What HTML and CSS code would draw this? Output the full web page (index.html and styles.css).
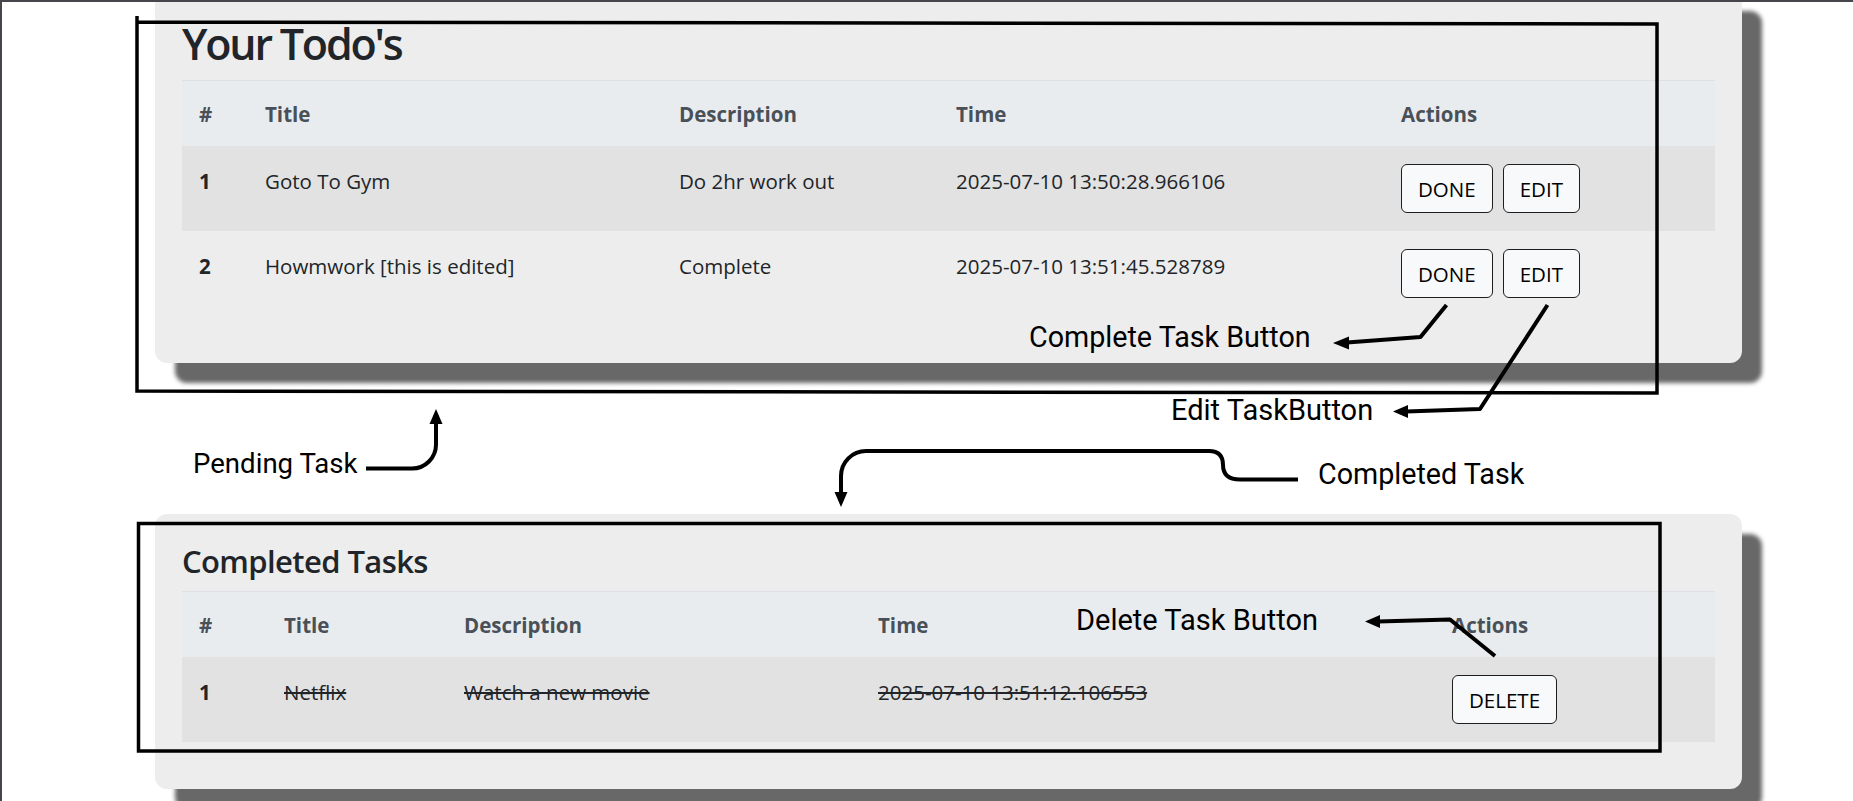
FILE: index.html
```html
<!DOCTYPE html>
<html lang="en">
<head>
<meta charset="utf-8">
<title>Your Todo's</title>
<link rel="stylesheet" href="styles.css">
</head>
<body>
<div class="viewport">
  <main class="stack">
    <section class="card card-todos">
      <h2 class="title-main">Your Todo's</h2>
      <table class="table">
        <thead>
          <tr>
            <th class="t1-num">#</th>
            <th class="t1-title">Title</th>
            <th class="t1-desc">Description</th>
            <th class="t1-time">Time</th>
            <th class="t1-act">Actions</th>
          </tr>
        </thead>
        <tbody>
          <tr class="striped">
            <th>1</th>
            <td>Goto To Gym</td>
            <td>Do 2hr work out</td>
            <td>2025-07-10 13:50:28.966106</td>
            <td><div class="actions"><button class="btn">DONE</button><button class="btn">EDIT</button></div></td>
          </tr>
          <tr>
            <th>2</th>
            <td>Howmwork [this is edited]</td>
            <td>Complete</td>
            <td>2025-07-10 13:51:45.528789</td>
            <td><div class="actions"><button class="btn">DONE</button><button class="btn">EDIT</button></div></td>
          </tr>
        </tbody>
      </table>
    </section>

    <section class="card card-done">
      <h4 class="title-sub">Completed Tasks</h4>
      <table class="table">
        <thead>
          <tr>
            <th class="t2-num">#</th>
            <th class="t2-title">Title</th>
            <th class="t2-desc">Description</th>
            <th class="t2-time">Time</th>
            <th class="t2-act">Actions</th>
          </tr>
        </thead>
        <tbody>
          <tr class="striped">
            <th>1</th>
            <td class="struck">Netflix</td>
            <td class="struck">Watch a new movie</td>
            <td class="struck">2025-07-10 13:51:12.106553</td>
            <td><div class="actions"><button class="btn">DELETE</button></div></td>
          </tr>
        </tbody>
      </table>
    </section>
  </main>
</div>

<svg class="annotations" width="1853" height="801" viewBox="0 0 1853 801" aria-hidden="true">
  <g fill="none" stroke="#000" stroke-width="3.5">
    <path d="M137 16 V391 L1657 393 V24 L137 22"/>
    <path d="M138.5 523.5 H1660 V751 H138.5 Z"/>
  </g>
  <g fill="none" stroke="#000" stroke-width="4" stroke-linejoin="round">
    <path d="M1446.5 305 L1420.5 337 L1347 342.5"/>
    <path d="M1547.5 305 L1480 409 L1406 411.5"/>
    <path d="M366 468.5 H412 A24 24 0 0 0 436 444.5 V422"/>
    <path d="M1298 479.5 H1240 Q1223 479.5 1223 465 Q1223 451 1209 451 H866 A25 25 0 0 0 841 476 V494"/>
    <path d="M1378 621.5 L1450 619.5 L1495 656"/>
  </g>
  <g fill="#000">
    <polygon points="1333,343 1349,336.5 1349,349.5"/>
    <polygon points="1393,411.5 1408,405 1408,418"/>
    <polygon points="436,409 429.5,424 442.5,424"/>
    <polygon points="841,507 834.5,492 847.5,492"/>
    <polygon points="1365,621.5 1380,615 1380,628"/>
  </g>
</svg>

<div class="note note-complete">Complete Task Button</div>
<div class="note note-edit">Edit TaskButton</div>
<div class="note note-pending">Pending Task</div>
<div class="note note-completed">Completed Task</div>
<div class="note note-delete">Delete Task Button</div>
</body>
</html>
```

FILE: styles.css
```css
html, body {
  margin: 0;
  padding: 0;
}

body {
  background: #ffffff;
  border-top: 2px solid #48464d;
  border-left: 2px solid #48464d;
  font-family: "Open Sans", "Noto Sans", sans-serif;
  color: #212529;
}

.viewport {
  height: 799px;
  overflow: hidden;
}

.stack {
  display: flex;
  flex-direction: column;
  align-items: flex-start;
  gap: 151px;
  padding-left: 153px;
}

.card {
  box-sizing: border-box;
  width: 1587px;
  background: #ededed;
  border-radius: 12px;
  box-shadow: 20px 20px 4px #686868;
  padding: 27px 27px 24px;
}

.card-todos {
  margin-top: -11px;
}

.title-main {
  margin: 0 0 10px;
  font-size: 43px;
  line-height: 52px;
  font-weight: 600;
  letter-spacing: -2.2px;
  color: #212529;
}

.title-sub {
  margin: 0 0 10px;
  font-size: 31px;
  line-height: 40px;
  font-weight: 600;
  letter-spacing: -0.6px;
  color: #212529;
}

.table {
  width: 1533px;
  border-collapse: separate;
  border-spacing: 0;
  table-layout: fixed;
  margin-bottom: 23px;
  font-size: 20.5px;
}

.table th,
.table td {
  box-sizing: border-box;
}

.table thead th {
  background: #e9ecef;
  border-top: 1px solid #dde1e5;
  color: #495057;
  font-weight: 700;
  text-align: left;
  padding: 17px 17px 16px;
  line-height: 32px;
}

.table tbody th,
.table tbody td {
  text-align: left;
  vertical-align: top;
  padding: 18px 17px;
  line-height: 34px;
}

.table tbody th {
  font-weight: 700;
  color: #212529;
}

.table tbody tr.striped {
  background: #e2e2e2;
}

.struck {
  text-decoration: line-through;
}

.t1-num { width: 66px; }
.t1-title { width: 414px; }
.t1-desc { width: 277px; }
.t1-time { width: 445px; }
.t1-act { width: 331px; }

.t2-num { width: 85px; }
.t2-title { width: 180px; }
.t2-desc { width: 414px; }
.t2-time { width: 574px; }
.t2-act { width: 280px; }

.actions {
  display: flex;
  gap: 10px;
}

.btn {
  box-sizing: border-box;
  height: 49px;
  padding: 2px 16px 0;
  line-height: 45px;
  font-family: "Open Sans", "Noto Sans", sans-serif;
  font-size: 20.5px;
  color: #000;
  background: #f8f9fa;
  border: 1px solid #1e1e1e;
  border-radius: 6px;
}

.annotations {
  position: absolute;
  top: 0;
  left: 0;
  pointer-events: none;
}

.note {
  position: absolute;
  font-family: Roboto, "Noto Sans", sans-serif;
  line-height: 1;
  color: #000;
  white-space: nowrap;
}

.note-complete { left: 1029px; top: 323px; font-size: 28.7px; }
.note-edit { left: 1171px; top: 396px; font-size: 29px; }
.note-pending { left: 193px; top: 450px; font-size: 27.6px; }
.note-completed { left: 1318px; top: 460px; font-size: 28.7px; }
.note-delete { left: 1076px; top: 606px; font-size: 29px; }
```
